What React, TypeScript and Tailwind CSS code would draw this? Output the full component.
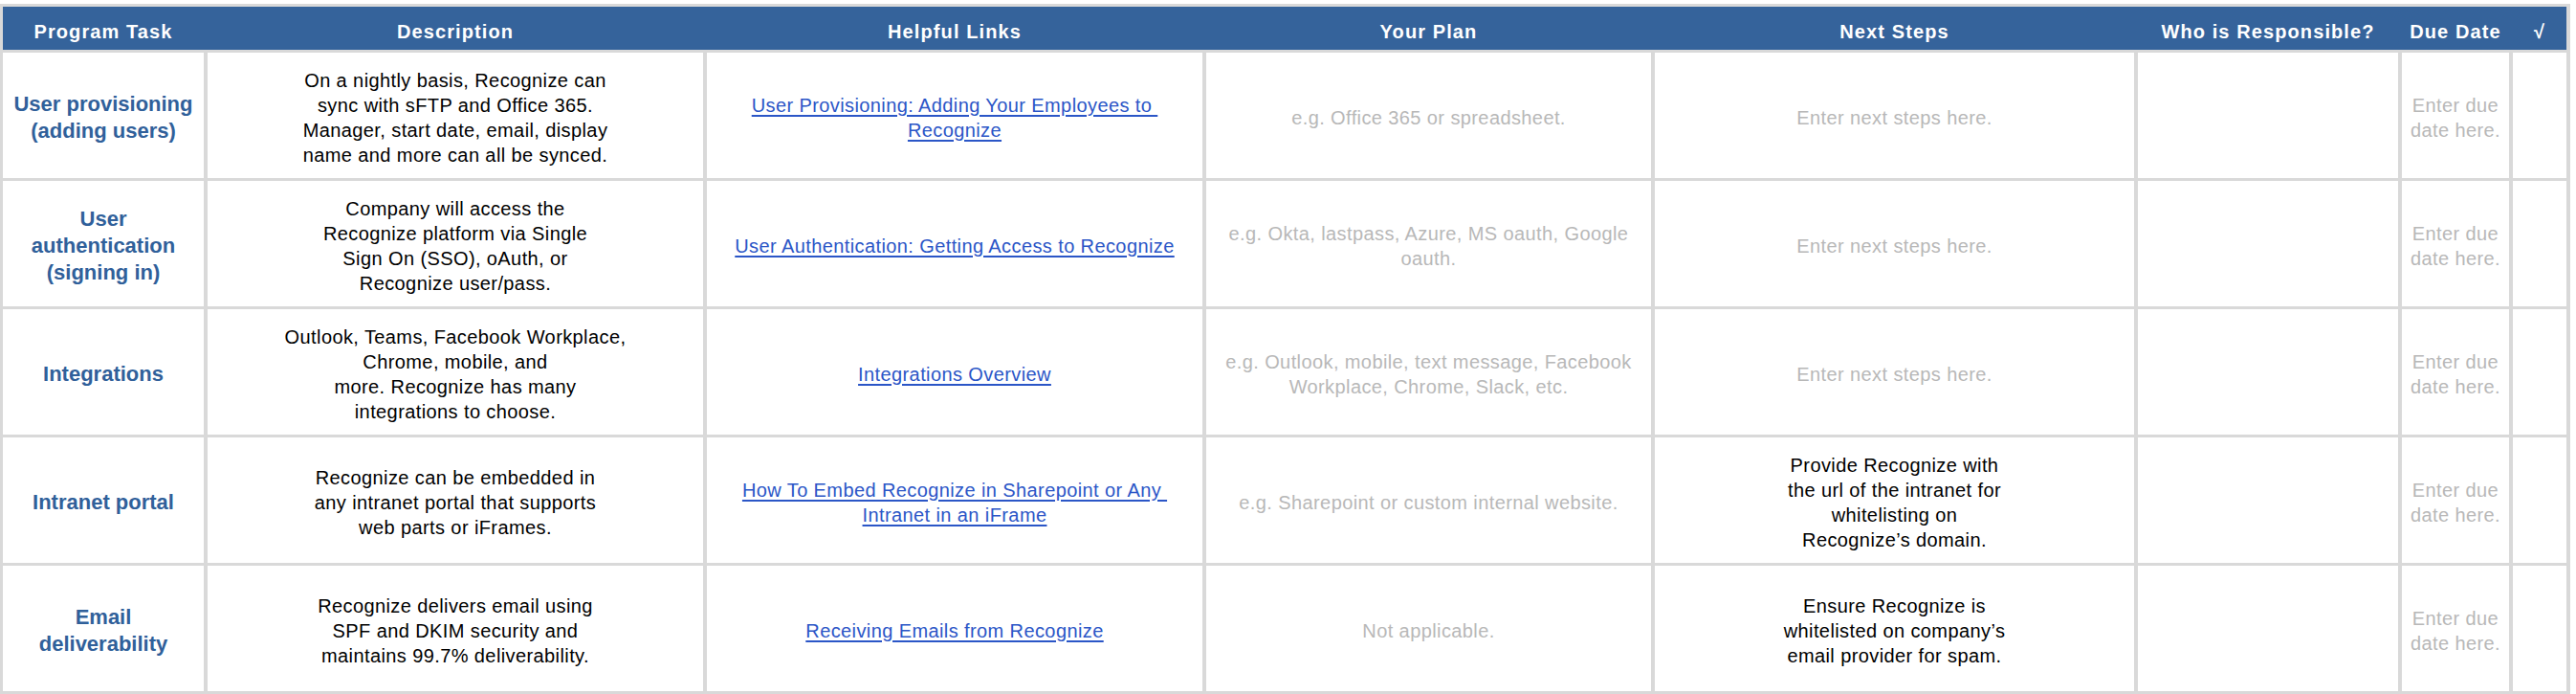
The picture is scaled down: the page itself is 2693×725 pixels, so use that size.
import { Fragment } from 'react';

type Row = {
  task: string[];
  desc: string[];
  link: string[];
  plan: string[];
  next: string[];
  nextFilled?: boolean;
};

const rows: Row[] = [
  {
    task: ['User provisioning', '(adding users)'],
    desc: [
      'On a nightly basis, Recognize can',
      'sync with sFTP and Office 365.',
      'Manager, start date, email, display',
      'name and more can all be synced.',
    ],
    link: ['User Provisioning: Adding Your Employees to\u00a0', 'Recognize'],
    plan: ['e.g. Office 365 or spreadsheet.'],
    next: ['Enter next steps here.'],
  },
  {
    task: ['User', 'authentication', '(signing in)'],
    desc: [
      'Company will access the',
      'Recognize platform via Single',
      'Sign On (SSO), oAuth, or',
      'Recognize user/pass.',
    ],
    link: ['User Authentication: Getting Access to Recognize'],
    plan: ['e.g. Okta, lastpass, Azure, MS oauth, Google', 'oauth.'],
    next: ['Enter next steps here.'],
  },
  {
    task: ['Integrations'],
    desc: [
      'Outlook, Teams, Facebook Workplace,',
      'Chrome, mobile, and',
      'more. Recognize has many',
      'integrations to choose.',
    ],
    link: ['Integrations Overview'],
    plan: ['e.g. Outlook, mobile, text message, Facebook', 'Workplace, Chrome, Slack, etc.'],
    next: ['Enter next steps here.'],
  },
  {
    task: ['Intranet portal'],
    desc: [
      'Recognize can be embedded in',
      'any intranet portal that supports',
      'web parts or iFrames.',
    ],
    link: ['How To Embed Recognize in Sharepoint or Any\u00a0', 'Intranet in an iFrame'],
    plan: ['e.g. Sharepoint or custom internal website.'],
    next: [
      'Provide Recognize with',
      'the url of the intranet for',
      'whitelisting on',
      'Recognize\u2019s domain.',
    ],
    nextFilled: true,
  },
  {
    task: ['Email', 'deliverability'],
    desc: [
      'Recognize delivers email using',
      'SPF and DKIM security and',
      'maintains 99.7% deliverability.',
    ],
    link: ['Receiving Emails from Recognize'],
    plan: ['Not applicable.'],
    next: ['Ensure Recognize is', 'whitelisted on company\u2019s', 'email provider for spam.'],
    nextFilled: true,
  },
];

const headers = [
  'Program Task',
  'Description',
  'Helpful Links',
  'Your Plan',
  'Next Steps',
  'Who is Responsible?',
  'Due Date',
  '\u221a',
];

function Lines({ lines }: { lines: string[] }) {
  return (
    <>
      {lines.map((l, i) => (
        <Fragment key={i}>
          {i > 0 && <br />}
          {l}
        </Fragment>
      ))}
    </>
  );
}

function Cell({ children }: { children?: React.ReactNode }) {
  return (
    <div className="bg-white flex items-center justify-center text-center pt-[4px] text-[20px] leading-[26px] tracking-[0.4px]">
      {children}
    </div>
  );
}

export default function App() {
  return (
    <div className="w-[2693px] h-[725px] bg-white pt-[4px] font-['Liberation_Sans',Arial,sans-serif]">
      <div className="w-[2687px] bg-[#d9d9d9] pl-[3px] pr-[4px] py-[3px] flex flex-col gap-[3px]">
        {/* header bar */}
        <div className="h-[45px] bg-[#35639b] grid grid-cols-[210px_518px_518px_465px_501px_272px_112px_56px] gap-x-[4px]">
          {headers.map((h) => (
            <div
              key={h}
              className="flex items-center justify-center pt-[6px] text-white font-bold text-[20px] tracking-[1.1px] whitespace-nowrap"
            >
              {h}
            </div>
          ))}
        </div>

        {/* task rows */}
        <div className="grid grid-cols-[210px_518px_518px_465px_501px_272px_112px_56px] auto-rows-[131px] gap-x-[4px] gap-y-[3px]">
          {rows.map((r, i) => (
            <Fragment key={i}>
              <div className="bg-white flex items-center justify-center text-center pt-[4px] text-[22px] leading-[28px] font-bold text-[#30609a]">
                <div>
                  <Lines lines={r.task} />
                </div>
              </div>
              <Cell>
                <div className="text-black">
                  <Lines lines={r.desc} />
                </div>
              </Cell>
              <Cell>
                <div>
                  <a href="#" className="text-[#2b56c7] underline decoration-[1.5px] underline-offset-[3px]">
                    <Lines lines={r.link} />
                  </a>
                </div>
              </Cell>
              <Cell>
                <div className="text-[#b8b8b8]">
                  <Lines lines={r.plan} />
                </div>
              </Cell>
              <Cell>
                <div className={r.nextFilled ? 'text-black' : 'text-[#b8b8b8]'}>
                  <Lines lines={r.next} />
                </div>
              </Cell>
              <Cell />
              <Cell>
                <div className="text-[#b8b8b8]">
                  Enter due
                  <br />
                  date here.
                </div>
              </Cell>
              <Cell />
            </Fragment>
          ))}
        </div>
      </div>
    </div>
  );
}
